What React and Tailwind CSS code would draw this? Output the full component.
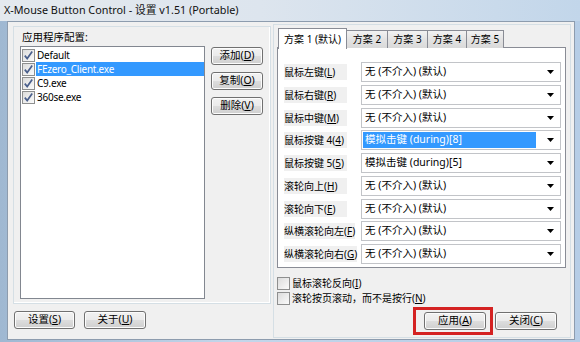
import React from "react";

const FONT = "[font-family:'Noto_Sans','Noto_Sans_CJK_SC',sans-serif]";

const Key = ({ k }) => (
  <span>
    (<span className="underline underline-offset-1">{k}</span>)
  </span>
);

const Btn = ({ label, k, className = "" }) => (
  <div
    className={`flex items-center justify-center whitespace-nowrap rounded-[3px] border border-[#707070] bg-[linear-gradient(#f2f2f2_0%,#ebebeb_48%,#dddddd_52%,#cfcfcf_100%)] text-[10.5px] text-black shadow-[inset_0_0_0_1px_#fcfcfc] ${className}`}
  >
    {label}
    <Key k={k} />
  </div>
);

const Check = ({ checked }) => (
  <div className="w-[13px] h-[13px] shrink-0 border border-[#8e8f8f] bg-[linear-gradient(135deg,#dcdcdc,#fbfbfb)] flex items-center justify-center">
    {checked && (
      <svg width="11" height="11" viewBox="0 0 11 11">
        <path d="M1.8 5.6 L4.2 8.6 L9.2 1.6" fill="none" stroke="#4a5f8c" strokeWidth="1.7" />
      </svg>
    )}
  </div>
);

const Arrow = () => (
  <svg width="7" height="4" viewBox="0 0 7 4" className="shrink-0">
    <path d="M0 0 H7 L3.5 4 Z" fill="#000" />
  </svg>
);

const apps = [
  { name: "Default" },
  { name: "FEzero_Client.exe", sel: true },
  { name: "C9.exe" },
  { name: "360se.exe" },
];

const NONE = "无 (不介入) (默认)";
const rows = [
  ["鼠标左键", "L", NONE],
  ["鼠标右键", "R", NONE],
  ["鼠标中键", "M", NONE],
  ["鼠标按键 4", "4", "模拟击键 (during)[8]", true],
  ["鼠标按键 5", "5", "模拟击键 (during)[5]"],
  ["滚轮向上", "H", NONE],
  ["滚轮向下", "E", NONE],
  ["纵横滚轮向左", "F", NONE],
  ["纵横滚轮向右", "G", NONE],
];

const tabs = [
  ["方案 1 (默认)", "w-[69px]"],
  ["方案 2", "w-[41px]"],
  ["方案 3", "w-[40px]"],
  ["方案 4", "w-[39px]"],
  ["方案 5", "w-[37px]"],
];

export default function App() {
  return (
    <div className={`w-[580px] h-[342px] overflow-hidden flex flex-col bg-[linear-gradient(90deg,#9fb8d2,#c3d6ea_40%,#b6cde6)] text-black ${FONT}`}>
      {/* title bar */}
      <div className="h-[21px] shrink-0 flex items-center pl-[4px] text-[10.8px] text-[#111] whitespace-nowrap bg-[linear-gradient(90deg,#e4e9ee,#dde5ee_45%,#c2d6ea)]">
        X-Mouse Button Control - 设置 v1.51 (Portable)
      </div>

      {/* client area */}
      <div className="flex-1 ml-[7px] mr-[5px] mb-[2px] border border-[#8d9cae] bg-[#f0f0f0] flex gap-[2px] pl-[5px] pr-[3px]">
        {/* left column */}
        <div className="w-[258px] flex flex-col pt-[4px]">
          <div className="h-[278px] border border-[#d5dfe5] shadow-[inset_-1px_-1px_0_#fff] px-[6px] pt-[3px] flex flex-col">
            <div className="text-[10.5px] leading-[14px] pl-[2px]">应用程序配置:</div>
            <div className="flex gap-[6px] mt-[2px] flex-1 pb-[4px]">
              <div className="w-[185px] border border-[#828790] bg-white pt-[1px] pl-[1px]">
                {apps.map((a) => (
                  <div key={a.name} className="h-[14px] flex items-center gap-[1px]">
                    <Check checked />
                    <div
                      className={`h-[14px] flex-1 flex items-center pl-[1px] text-[10px] tracking-[-0.25px] ${
                        a.sel ? "bg-[#3399ff] text-white" : ""
                      }`}
                    >
                      {a.name}
                    </div>
                  </div>
                ))}
              </div>
              <div className="flex flex-col gap-[7px] pt-[1px]">
                <Btn label="添加" k="D" className="w-[52px] h-[18px]" />
                <Btn label="复制" k="O" className="w-[52px] h-[18px]" />
                <Btn label="删除" k="V" className="w-[52px] h-[18px]" />
              </div>
            </div>
          </div>
          <div className="flex gap-[9px] mt-[7px] pl-[1px]">
            <Btn label="设置" k="S" className="w-[61px] h-[18px]" />
            <Btn label="关于" k="U" className="w-[62px] h-[18px]" />
          </div>
        </div>

        {/* right column */}
        <div className="flex-1 mt-[2px] mb-[1px] border border-[#d5dfe5] pl-[3px] pr-[4px] pt-[3px] flex flex-col">
          <div className="flex items-end h-[20px] pl-[1px] relative z-10">
            {tabs.map(([t, w], i) => (
              <div
                key={t}
                className={`${w} flex items-center justify-center whitespace-nowrap text-[10px] border border-[#898c95] border-b-0 ${
                  i === 0
                    ? "h-[21px] bg-white -mb-px"
                    : "h-[18px] border-l-0 bg-[linear-gradient(#f2f2f2,#e3e3e3_50%,#d9d9d9)]"
                }`}
              >
                {t}
              </div>
            ))}
          </div>
          <div className="h-[221px] -mt-px border border-[#898c95] bg-white pl-[6px] pr-[4px] pt-[14px] flex flex-col gap-[2.75px]">
            {rows.map(([lab, k, val, sel]) => (
              <div key={lab} className="h-[20px] flex items-center">
                <div className="w-[77px] shrink-0 text-[10px] whitespace-nowrap">
                  <span className="bg-[#f0f0f0] inline-block min-w-[63px] leading-[16px]">
                    {lab}
                    <Key k={k} />
                  </span>
                </div>
                <div className="flex-1 h-[20px] border border-[#c2c4c8] bg-white flex items-center p-[1px] pr-[6px]">
                  <div
                    className={`flex-1 h-full flex items-center pl-[2px] text-[10.5px] whitespace-nowrap mr-[11px] ${
                      sel ? "bg-[#3399ff] text-white" : ""
                    }`}
                  >
                    {val}
                  </div>
                  <Arrow />
                </div>
              </div>
            ))}
          </div>
          <div className="mt-[8px] flex flex-col">
            <div className="h-[15px] flex items-center gap-[2px] text-[10px] whitespace-nowrap">
              <Check />
              <span>
                鼠标滚轮反向<Key k="I" />
              </span>
            </div>
            <div className="h-[15px] flex items-center gap-[2px] text-[10px] whitespace-nowrap">
              <Check />
              <span>
                滚轮按页滚动，而不是按行<Key k="N" />
              </span>
            </div>
          </div>
          <div className="flex justify-end items-center gap-[2px] pr-[9px] mt-[1px]">
            <div className="border-[3px] border-[#d42222] p-[2px] pl-[8px] pr-[4px]">
              <Btn label="应用" k="A" className="w-[62px] h-[18px]" />
            </div>
            <Btn label="关闭" k="C" className="w-[62px] h-[18px]" />
          </div>
        </div>
      </div>
    </div>
  );
}
